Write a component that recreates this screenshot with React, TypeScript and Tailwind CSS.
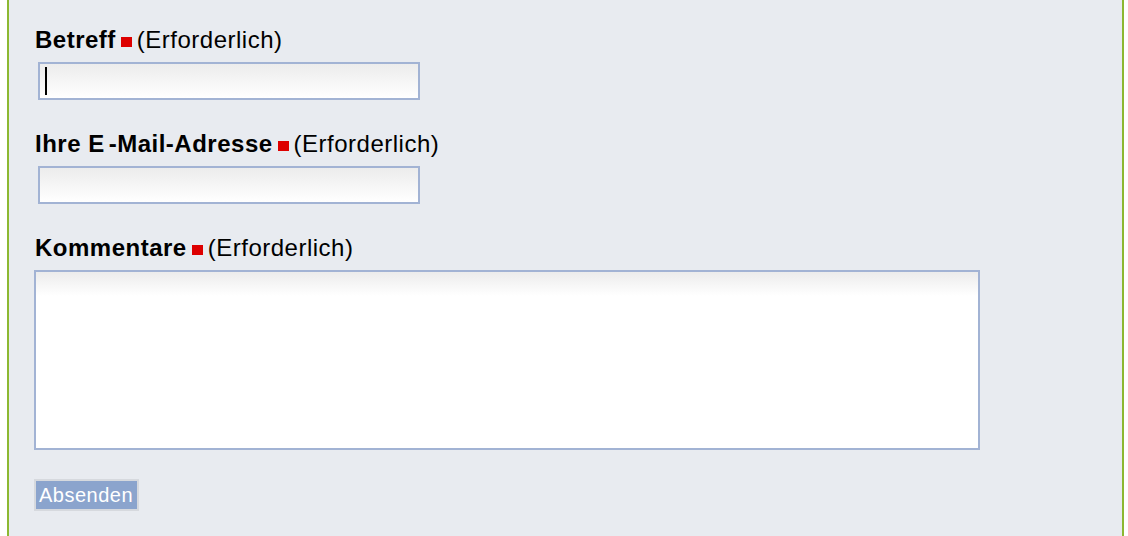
import React from "react";

const Required: React.FC = () => (
  <span className="inline-block w-[11px] h-[10px] bg-[#dd0000] ml-[5px] mr-[5px] align-[1px]" />
);

interface FieldLabelProps {
  children: React.ReactNode;
  className?: string;
}

const FieldLabel: React.FC<FieldLabelProps> = ({ children, className = "" }) => (
  <div className={`text-[24px] leading-[28px] tracking-[0.5px] text-black ${className}`}>
    <span className="font-bold">{children}</span>
    <Required />
    <span>(Erforderlich)</span>
  </div>
);

const App: React.FC = () => {
  return (
    <div className="h-[536px] bg-white pl-[7px] font-['Liberation_Sans',Arial,sans-serif]">
      <div className="w-[1117px] h-[536px] border-x-2 border-[#8cb832] bg-[#e8ebf0] pl-[26px] pt-[26px]">
        {/* Betreff */}
        <FieldLabel>Betreff</FieldLabel>
        <div className="mt-[8px] ml-[3px] w-[382px] h-[38px] border-2 border-[#a2b3d4] bg-gradient-to-b from-[#ececec] to-white flex items-center pl-[5px]">
          <div className="w-[2px] h-[28px] bg-black" />
        </div>

        {/* E-Mail */}
        <FieldLabel className="mt-[30px]">
          Ihre E<span className="ml-[4px]">-Mail-Adresse</span>
        </FieldLabel>
        <div className="mt-[8px] ml-[3px] w-[382px] h-[38px] border-2 border-[#a2b3d4] bg-gradient-to-b from-[#ececec] to-white" />

        {/* Kommentare */}
        <FieldLabel className="mt-[30px]">Kommentare</FieldLabel>
        <div className="mt-[8px] ml-[-1px] w-[946px] h-[180px] border-2 border-[#a2b3d4] bg-[linear-gradient(to_bottom,#ececec_0px,#ffffff_24px)]" />

        {/* Submit */}
        <button
          type="button"
          className="mt-[29px] ml-[-1px] w-[105px] h-[32px] border-2 border-[#d6d9de] bg-[#8ba4cd] text-white text-[20px] leading-[28px] tracking-[0.5px] text-left pl-[3px]"
        >
          Absenden
        </button>
      </div>
    </div>
  );
};

export default App;
